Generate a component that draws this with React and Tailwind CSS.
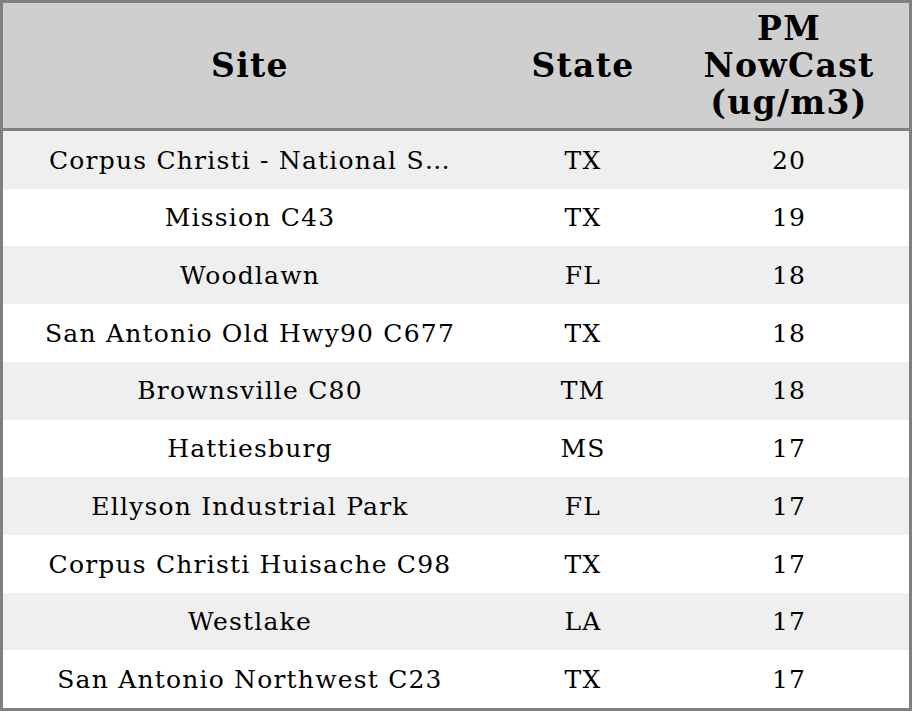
const rows = [
  ["Corpus Christi - National S…", "TX", 20],
  ["Mission C43", "TX", 19],
  ["Woodlawn", "FL", 18],
  ["San Antonio Old Hwy90 C677", "TX", 18],
  ["Brownsville C80", "TM", 18],
  ["Hattiesburg", "MS", 17],
  ["Ellyson Industrial Park", "FL", 17],
  ["Corpus Christi Huisache C98", "TX", 17],
  ["Westlake", "LA", 17],
  ["San Antonio Northwest C23", "TX", 17],
];

export default function App() {
  return (
    <div className="w-[912px] h-[711px] border-[3px] border-[#808080] bg-white text-black font-['DejaVu_Serif',serif] flex flex-col overflow-hidden">
      {/* header */}
      <div className="h-[128px] shrink-0 grid grid-cols-[494px_172px_1fr] items-center bg-[#cfcfcf] border-b-[3px] border-[#808080] text-[33px] font-bold leading-[37px] tracking-[1.3px] text-center">
        <div>Site</div>
        <div>State</div>
        <div>
          PM
          <br />
          NowCast
          <br />
          (ug/m3)
        </div>
      </div>

      {/* rows */}
      <div className="flex-1 flex flex-col">
        {rows.map(([site, state, val], i) => (
          <div
            key={i}
            className={`flex-1 grid grid-cols-[494px_172px_1fr] items-center text-center text-[25px] tracking-[1.2px] pt-px ${
              i % 2 === 0 ? "bg-[#efefef]" : "bg-white"
            }`}
          >
            <div className="whitespace-nowrap">{site}</div>
            <div>{state}</div>
            <div>{val}</div>
          </div>
        ))}
      </div>
    </div>
  );
}
